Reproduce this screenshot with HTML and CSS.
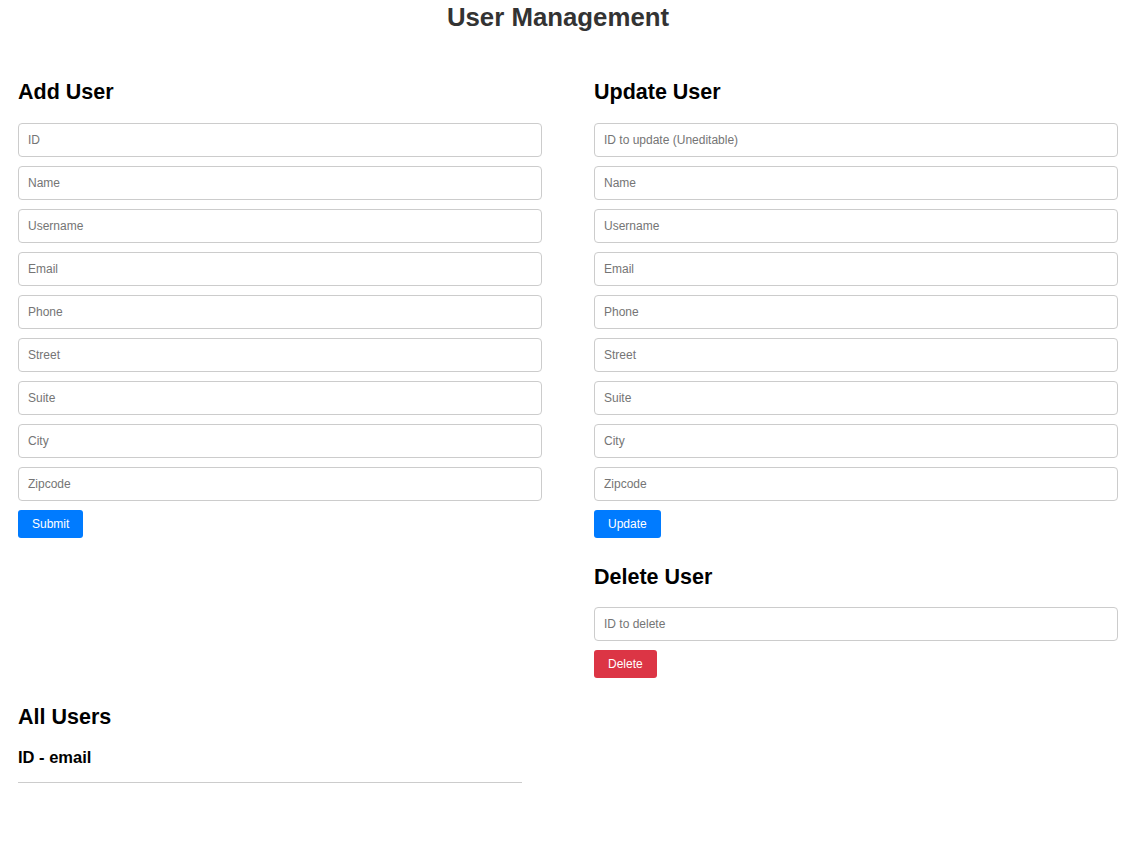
FILE: index.html
```html
<!DOCTYPE html>
<html lang="en">
<head>
<meta charset="utf-8">
<title>User Management</title>
<link rel="stylesheet" href="styles.css">
</head>
<body>
<div class="page">
  <h1 class="title">User Management</h1>
  <div class="columns">
    <section class="column">
      <h2 class="heading">Add User</h2>
      <form class="form">
        <input class="field" type="text" placeholder="ID">
        <input class="field" type="text" placeholder="Name">
        <input class="field" type="text" placeholder="Username">
        <input class="field" type="text" placeholder="Email">
        <input class="field" type="text" placeholder="Phone">
        <input class="field" type="text" placeholder="Street">
        <input class="field" type="text" placeholder="Suite">
        <input class="field" type="text" placeholder="City">
        <input class="field" type="text" placeholder="Zipcode">
        <div class="actions"><button class="btn btn-primary" type="button">Submit</button></div>
      </form>
    </section>
    <section class="column">
      <h2 class="heading">Update User</h2>
      <form class="form">
        <input class="field" type="text" placeholder="ID to update (Uneditable)">
        <input class="field" type="text" placeholder="Name">
        <input class="field" type="text" placeholder="Username">
        <input class="field" type="text" placeholder="Email">
        <input class="field" type="text" placeholder="Phone">
        <input class="field" type="text" placeholder="Street">
        <input class="field" type="text" placeholder="Suite">
        <input class="field" type="text" placeholder="City">
        <input class="field" type="text" placeholder="Zipcode">
        <div class="actions"><button class="btn btn-primary" type="button">Update</button></div>
      </form>
      <h2 class="heading heading-delete">Delete User</h2>
      <form class="form">
        <input class="field" type="text" placeholder="ID to delete">
        <div class="actions"><button class="btn btn-danger" type="button">Delete</button></div>
      </form>
    </section>
  </div>
  <section class="users">
    <h2 class="heading heading-users">All Users</h2>
    <div class="user-list">
      <div class="user-head">ID - email</div>
    </div>
  </section>
</div>
</body>
</html>
```

FILE: styles.css
```css
* {
  box-sizing: border-box;
}

html, body {
  margin: 0;
  padding: 0;
  background: #ffffff;
}

body {
  font-family: "Liberation Sans", Arial, sans-serif;
  color: #000000;
}

.page {
  padding: 2px 13px 40px 18px;
}

.title {
  margin: 0 20px 0 0;
  font-size: 25.8px;
  line-height: 30px;
  font-weight: bold;
  color: #333333;
  text-align: center;
}

.columns {
  display: grid;
  grid-template-columns: 524px 524px;
  column-gap: 52px;
  margin-top: 48px;
  align-items: start;
}

.heading {
  margin: 0 0 18px;
  font-size: 21.5px;
  line-height: 25px;
  font-weight: bold;
}

.heading-delete {
  margin: 27px 0 17px;
}

.heading-users {
  margin: 27px 0 18px;
}

.form {
  display: flex;
  flex-direction: column;
  gap: 9px;
  margin: 0;
}

.field {
  display: block;
  width: 100%;
  height: 34px;
  margin: 0;
  padding: 0 9px;
  border: 1px solid #cccccc;
  border-radius: 4px;
  font-family: "Liberation Sans", Arial, sans-serif;
  font-size: 12px;
  color: #333333;
  background: #ffffff;
  outline: none;
}

.field::placeholder {
  color: #757575;
  opacity: 1;
}

.actions {
  display: flex;
}

.btn {
  height: 28px;
  padding: 0 14px;
  border: none;
  border-radius: 3px;
  font-family: "Liberation Sans", Arial, sans-serif;
  font-size: 12px;
  color: #ffffff;
  cursor: pointer;
}

.btn-primary {
  background: #007bff;
}

.btn-danger {
  background: #dc3545;
}

.users {
  display: block;
}

.user-list {
  width: 504px;
  padding-bottom: 15px;
  border-bottom: 1px solid #cccccc;
}

.user-head {
  font-size: 16.5px;
  line-height: 19px;
  font-weight: bold;
}
```
